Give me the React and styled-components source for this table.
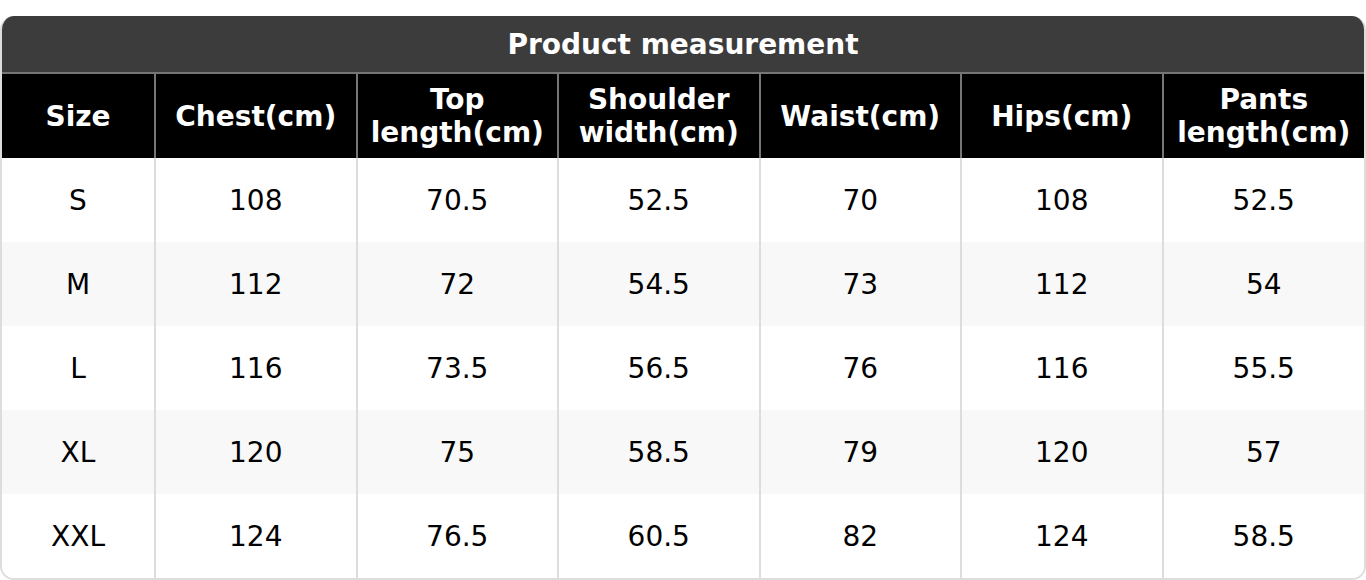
import styled, { createGlobalStyle } from "styled-components";

const GlobalStyle = createGlobalStyle`
  body {
    margin: 0;
    background: #ffffff;
    font-family: "DejaVu Sans", "Liberation Sans", sans-serif;
  }
`;

const Page = styled.div`
  padding-top: 16px;
`;

const Card = styled.div`
  border: 2px solid #dddddd;
  border-top: none;
  border-radius: 14px;
  overflow: hidden;
  background: #ffffff;
`;

const Title = styled.div`
  height: 56px;
  display: flex;
  align-items: center;
  justify-content: center;
  background: #3c3c3c;
  color: #ffffff;
  font-weight: 700;
  font-size: 28px;
  border-bottom: 2px solid #767676;
  margin: 0 -2px;
`;

const Table = styled.table`
  width: 100%;
  border-collapse: collapse;
  table-layout: fixed;
`;

const HeadCell = styled.th`
  height: 84px;
  padding: 0 2px;
  background: #000000;
  color: #ffffff;
  font-size: 28px;
  font-weight: 700;
  line-height: 33px;
  text-align: center;
  border-left: 2px solid #767676;

  &:first-child {
    border-left: none;
    width: 148px;
  }
`;

const Row = styled.tr`
  background: ${(p) => (p.$striped ? "#f8f8f8" : "#ffffff")};
`;

const Cell = styled.td`
  height: 84px;
  padding: 0;
  font-size: 28px;
  color: #000000;
  text-align: center;
  border-left: 2px solid #dddddd;

  &:first-child {
    border-left: none;
  }
`;

const headers = [
  "Size",
  "Chest(cm)",
  "Top length(cm)",
  "Shoulder width(cm)",
  "Waist(cm)",
  "Hips(cm)",
  "Pants length(cm)",
];

const rows = [
  ["S", "108", "70.5", "52.5", "70", "108", "52.5"],
  ["M", "112", "72", "54.5", "73", "112", "54"],
  ["L", "116", "73.5", "56.5", "76", "116", "55.5"],
  ["XL", "120", "75", "58.5", "79", "120", "57"],
  ["XXL", "124", "76.5", "60.5", "82", "124", "58.5"],
];

export default function App() {
  return (
    <Page>
      <GlobalStyle />
      <Card>
        <Title>Product measurement</Title>
        <Table>
          <thead>
            <tr>
              {headers.map((h) => (
                <HeadCell key={h}>{h}</HeadCell>
              ))}
            </tr>
          </thead>
          <tbody>
            {rows.map((r, i) => (
              <Row key={r[0]} $striped={i % 2 === 1}>
                {r.map((v, j) => (
                  <Cell key={j}>{v}</Cell>
                ))}
              </Row>
            ))}
          </tbody>
        </Table>
      </Card>
    </Page>
  );
}
